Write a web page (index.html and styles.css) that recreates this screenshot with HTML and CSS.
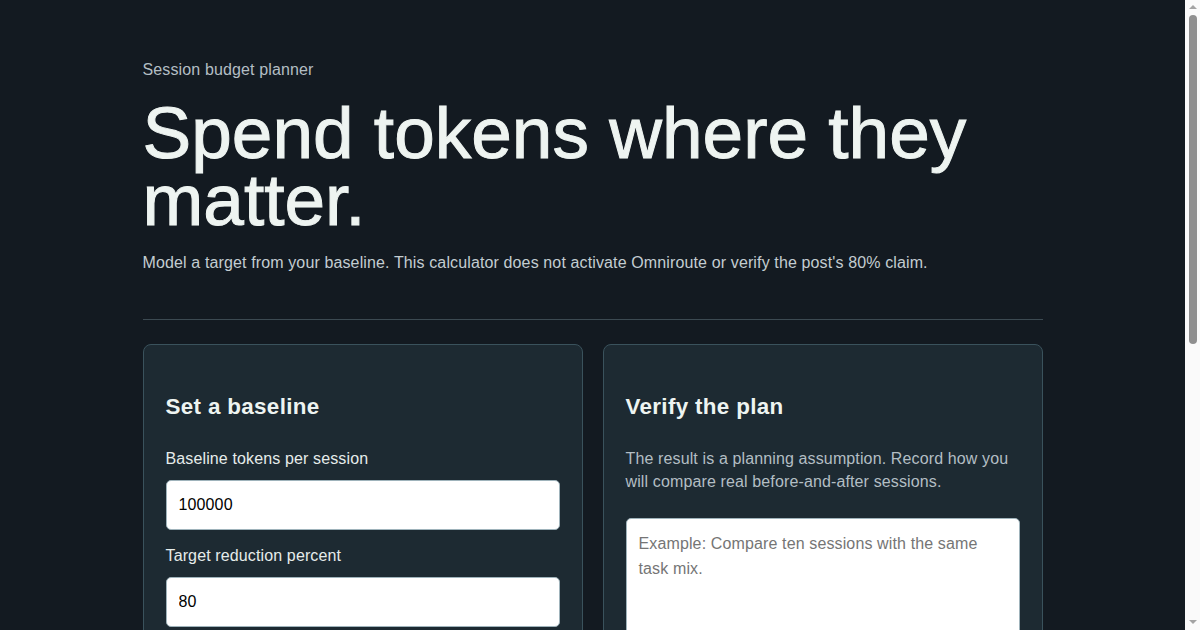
FILE: index.html
```html
<!DOCTYPE html>
<html lang="en">
<head>
    <meta charset="UTF-8">
    <meta name="viewport" content="width=device-width, initial-scale=1.0">
    <title>Session budget planner</title>
    <link rel="stylesheet" href="styles.css">
</head>
<body>
    <main class="page">
        <header class="intro">
            <p class="eyebrow">Session budget planner</p>
            <h1>Spend tokens where they matter.</h1>
            <p class="lede">Model a target from your baseline. This calculator does not activate Omniroute or verify the post's 80% claim.</p>
        </header>

        <section class="cards">
            <div class="card">
                <h2>Set a baseline</h2>

                <div class="field">
                    <label for="baseline">Baseline tokens per session</label>
                    <input type="number" id="baseline" value="100000">
                </div>

                <div class="field">
                    <label for="reduction">Target reduction percent</label>
                    <input type="number" id="reduction" value="80">
                </div>

                <div class="field">
                    <label for="sessions">Sessions per week</label>
                    <input type="number" id="sessions" value="20">
                </div>

                <div class="result">
                    <div class="result-row">
                        <span>Target tokens per session</span>
                        <strong id="perSession">20,000</strong>
                    </div>
                    <div class="result-row">
                        <span>Tokens saved per week</span>
                        <strong id="saved">1,600,000</strong>
                    </div>
                </div>
            </div>

            <div class="card">
                <h2>Verify the plan</h2>
                <p class="note">The result is a planning assumption. Record how you will compare real before-and-after sessions.</p>
                <textarea id="plan" placeholder="Example: Compare ten sessions with the same task mix."></textarea>
                <button class="btn" type="button">Save plan</button>
            </div>
        </section>

        <p class="footnote">Figures are estimates. Measure real sessions before changing a budget.</p>
    </main>

    <!-- window scrollbar, as it shows in the capture -->
    <div class="scrollbar" aria-hidden="true">
        <span class="arrow up"></span>
        <span class="thumb"></span>
        <span class="arrow down"></span>
    </div>

    <script>
        function update() {
            const base = Number(document.getElementById("baseline").value) || 0;
            const pct = Number(document.getElementById("reduction").value) || 0;
            const count = Number(document.getElementById("sessions").value) || 0;
            const target = Math.round(base * (1 - pct / 100));
            document.getElementById("perSession").innerText = target.toLocaleString("en-US");
            document.getElementById("saved").innerText = ((base - target) * count).toLocaleString("en-US");
        }
        document.querySelectorAll("input").forEach(el => el.addEventListener("input", update));
        update();
    </script>
</body>
</html>
```

FILE: styles.css
```css
:root {
    --bg: #131a21;
    --card-bg: #1d2a32;
    --card-border: #3a525c;
    --text: #eef4f1;
    --muted: #b3bec4;
    --rule: #3c4a52;
    --field-border: #9fb3bb;
}

body {
    margin: 0;
    padding-right: 15px;
    background: var(--bg);
    color: var(--text);
    font-family: "Liberation Sans", Arial, sans-serif;
    font-size: 16px;
    line-height: 1.45;
    letter-spacing: 0.008em;
}

.page {
    max-width: 900px;
    margin: 0 auto;
    padding: 58px 0 120px;
}

.intro {
    padding-bottom: 45px;
    border-bottom: 1px solid var(--rule);
}

.eyebrow {
    margin: 0 0 18px;
    color: var(--muted);
}

h1 {
    margin: 0;
    font-size: 73px;
    font-weight: 400;
    line-height: 0.92;
    letter-spacing: 0;
    color: var(--text);
    -webkit-text-stroke: 1px var(--text);
}

.lede {
    margin: 17px 0 0;
    color: #c3cdd1;
}

.cards {
    display: grid;
    grid-template-columns: 1fr 1fr;
    gap: 20px;
    margin-top: 24px;
}

.card {
    background: var(--card-bg);
    border: 1px solid var(--card-border);
    border-radius: 8px;
    padding: 22px;
}

h2 {
    margin: 27px 0 26px;
    font-size: 22.4px;
    font-weight: 700;
    line-height: 1.2;
    letter-spacing: 0.015em;
}

.field {
    margin-bottom: 14px;
}

label {
    display: block;
    margin-bottom: 10px;
    color: #e6eceb;
}

input,
textarea {
    display: block;
    width: 100%;
    box-sizing: border-box;
    border: 1px solid var(--field-border);
    border-radius: 5px;
    background: #fff;
    color: #000;
    font-family: "Liberation Sans", Arial, sans-serif;
    font-size: 16px;
    letter-spacing: 0.008em;
}

input {
    height: 50px;
    padding: 0 12px;
}

input::-webkit-outer-spin-button,
input::-webkit-inner-spin-button {
    -webkit-appearance: none;
    margin: 0;
}

textarea {
    height: 170px;
    padding: 13px 12px 12px;
    line-height: 1.55;
    resize: vertical;
}

textarea::placeholder {
    color: #757575;
}

.note {
    margin: 0 0 25px;
    color: var(--muted);
}

.result {
    margin-top: 24px;
    padding: 16px;
    border: 1px solid var(--card-border);
    border-radius: 6px;
    background: #17222a;
}

.result-row {
    display: flex;
    justify-content: space-between;
    padding: 4px 0;
    color: var(--muted);
}

.result-row strong {
    color: var(--text);
}

.btn {
    margin-top: 18px;
    padding: 12px 20px;
    border: 1px solid var(--field-border);
    border-radius: 5px;
    background: var(--text);
    color: var(--bg);
    font-family: inherit;
    font-size: 16px;
    font-weight: 700;
    cursor: pointer;
}

.footnote {
    margin: 40px 0 0;
    color: var(--muted);
}

.scrollbar {
    position: fixed;
    top: 0;
    right: 0;
    bottom: 0;
    width: 15px;
    background: #fafafa;
    display: flex;
    flex-direction: column;
    align-items: center;
}

.arrow {
    width: 0;
    height: 0;
    border-left: 4px solid transparent;
    border-right: 4px solid transparent;
}

.arrow.up {
    margin-top: 5px;
    border-bottom: 4px solid #a3a3a3;
}

.arrow.down {
    margin-top: auto;
    margin-bottom: 6px;
    border-top: 4px solid #a3a3a3;
}

.thumb {
    width: 8px;
    height: 329px;
    margin-top: 6px;
    border-radius: 4px;
    background: #8f8f8f;
}
```
